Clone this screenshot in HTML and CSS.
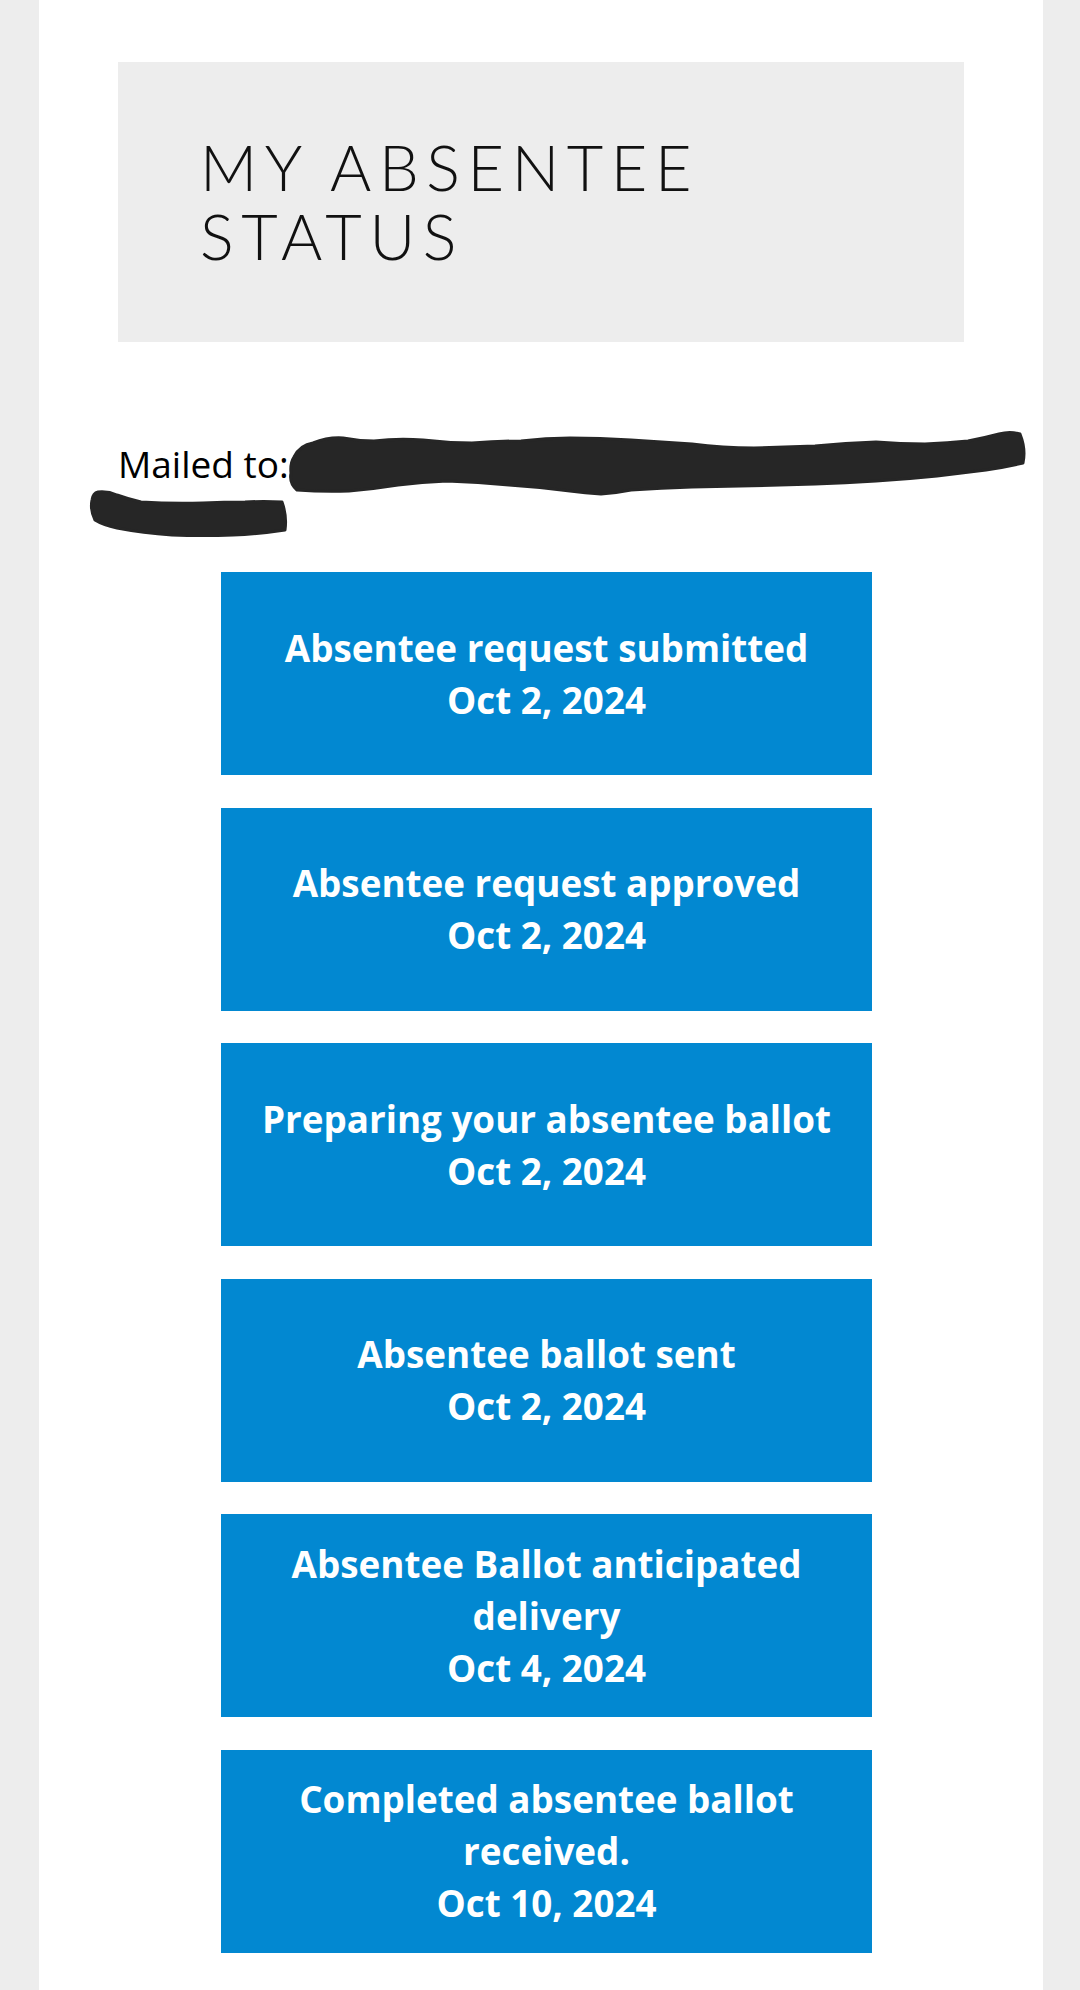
FILE: index.html
```html
<!DOCTYPE html>
<html lang="en">
<head>
<meta charset="utf-8">
<title>My Absentee Status</title>
<link rel="stylesheet" href="styles.css">
</head>
<body>
<main class="page">
  <header class="status-header">
    <h1 class="status-title">MY ABSENTEE<br>STATUS</h1>
  </header>

  <p class="mailed">Mailed to:
    <svg class="redact" width="960" height="115" viewBox="0 0 960 115" aria-hidden="true">
      <path d="M206 28 Q212 16 225 14 Q240 8 255 9 Q270 12 286 12 Q310 9 335 11 Q360 14 384 14 Q410 12 433 12 Q458 9 482 9 Q512 9 543 11 Q575 13 604 15 Q635 19 666 19 Q697 18 727 17 Q758 14 788 13 Q812 15 837 15 Q860 14 880 12 Q896 9 911 5 Q922 2 932 5 Q938 20 935 34 Q918 38 898 41 Q874 44 849 47 Q820 50 788 52 Q757 54 727 55 Q665 57 604 58 Q573 59 543 61 Q528 64 513 65 Q497 64 482 62 Q452 58 421 56 Q390 53 359 52 Q334 53 310 56 Q285 60 261 62 Q235 63 209 61 Q201 54 203 44 Q202 34 206 28 Z" fill="#262626" stroke="#262626" stroke-width="3" stroke-linejoin="round"/>
      <path d="M10 63 Q20 62 29 66 Q40 70 53 73 Q84 75 115 74 Q136 73 157 73 Q176 72 194 73 Q199 87 197 101 Q171 105 145 106 Q115 107 84 106 Q55 104 29 99 Q15 96 7 91 Q2 81 4 71 Q5 64 10 63 Z" fill="#262626" stroke="#262626" stroke-width="3" stroke-linejoin="round"/>
    </svg>
  </p>

  <ol class="steps">
    <li class="step">Absentee request submitted<br>Oct 2, 2024</li>
    <li class="step">Absentee request approved<br>Oct 2, 2024</li>
    <li class="step">Preparing your absentee ballot<br>Oct 2, 2024</li>
    <li class="step">Absentee ballot sent<br>Oct 2, 2024</li>
    <li class="step">Absentee Ballot anticipated delivery<br>Oct 4, 2024</li>
    <li class="step">Completed absentee ballot received.<br>Oct 10, 2024</li>
  </ol>
</main>
</body>
</html>
```

FILE: styles.css
```css
html, body {
  margin: 0;
  padding: 0;
}

body {
  background: #ededed;
  font-family: "Open Sans", "Noto Sans", sans-serif;
  color: #000;
}

.page {
  margin-left: 39px;
  width: 1004px;
  min-height: 1990px;
  background: #ffffff;
  padding: 62px 79px 0 79px;
  box-sizing: border-box;
}

.status-header {
  background: #ededed;
  height: 280px;
  display: flex;
  flex-direction: column;
  justify-content: center;
  padding-left: 82px;
  padding-bottom: 2px;
  box-sizing: border-box;
}

.status-title {
  margin: 0;
  font-family: "Lato", "Open Sans", sans-serif;
  font-weight: 300;
  font-size: 63px;
  line-height: 69px;
  letter-spacing: 0.12em;
  color: #111;
}

.mailed {
  position: relative;
  margin: 97px 0 0 0;
  font-size: 37px;
  line-height: 50px;
  height: 100px;
}

.redact {
  position: absolute;
  left: -30px;
  top: -10px;
}

.steps {
  list-style: none;
  margin: 33px 0 0 103px;
  padding: 0;
  width: 651px;
  display: flex;
  flex-direction: column;
  gap: 32.5px;
}

.step {
  background: #0288d1;
  color: #fff;
  height: 203px;
  display: flex;
  align-items: center;
  justify-content: center;
  text-align: center;
  font-weight: 700;
  font-size: 36.8px;
  line-height: 52px;
  padding: 0 20px;
  box-sizing: border-box;
}
```
